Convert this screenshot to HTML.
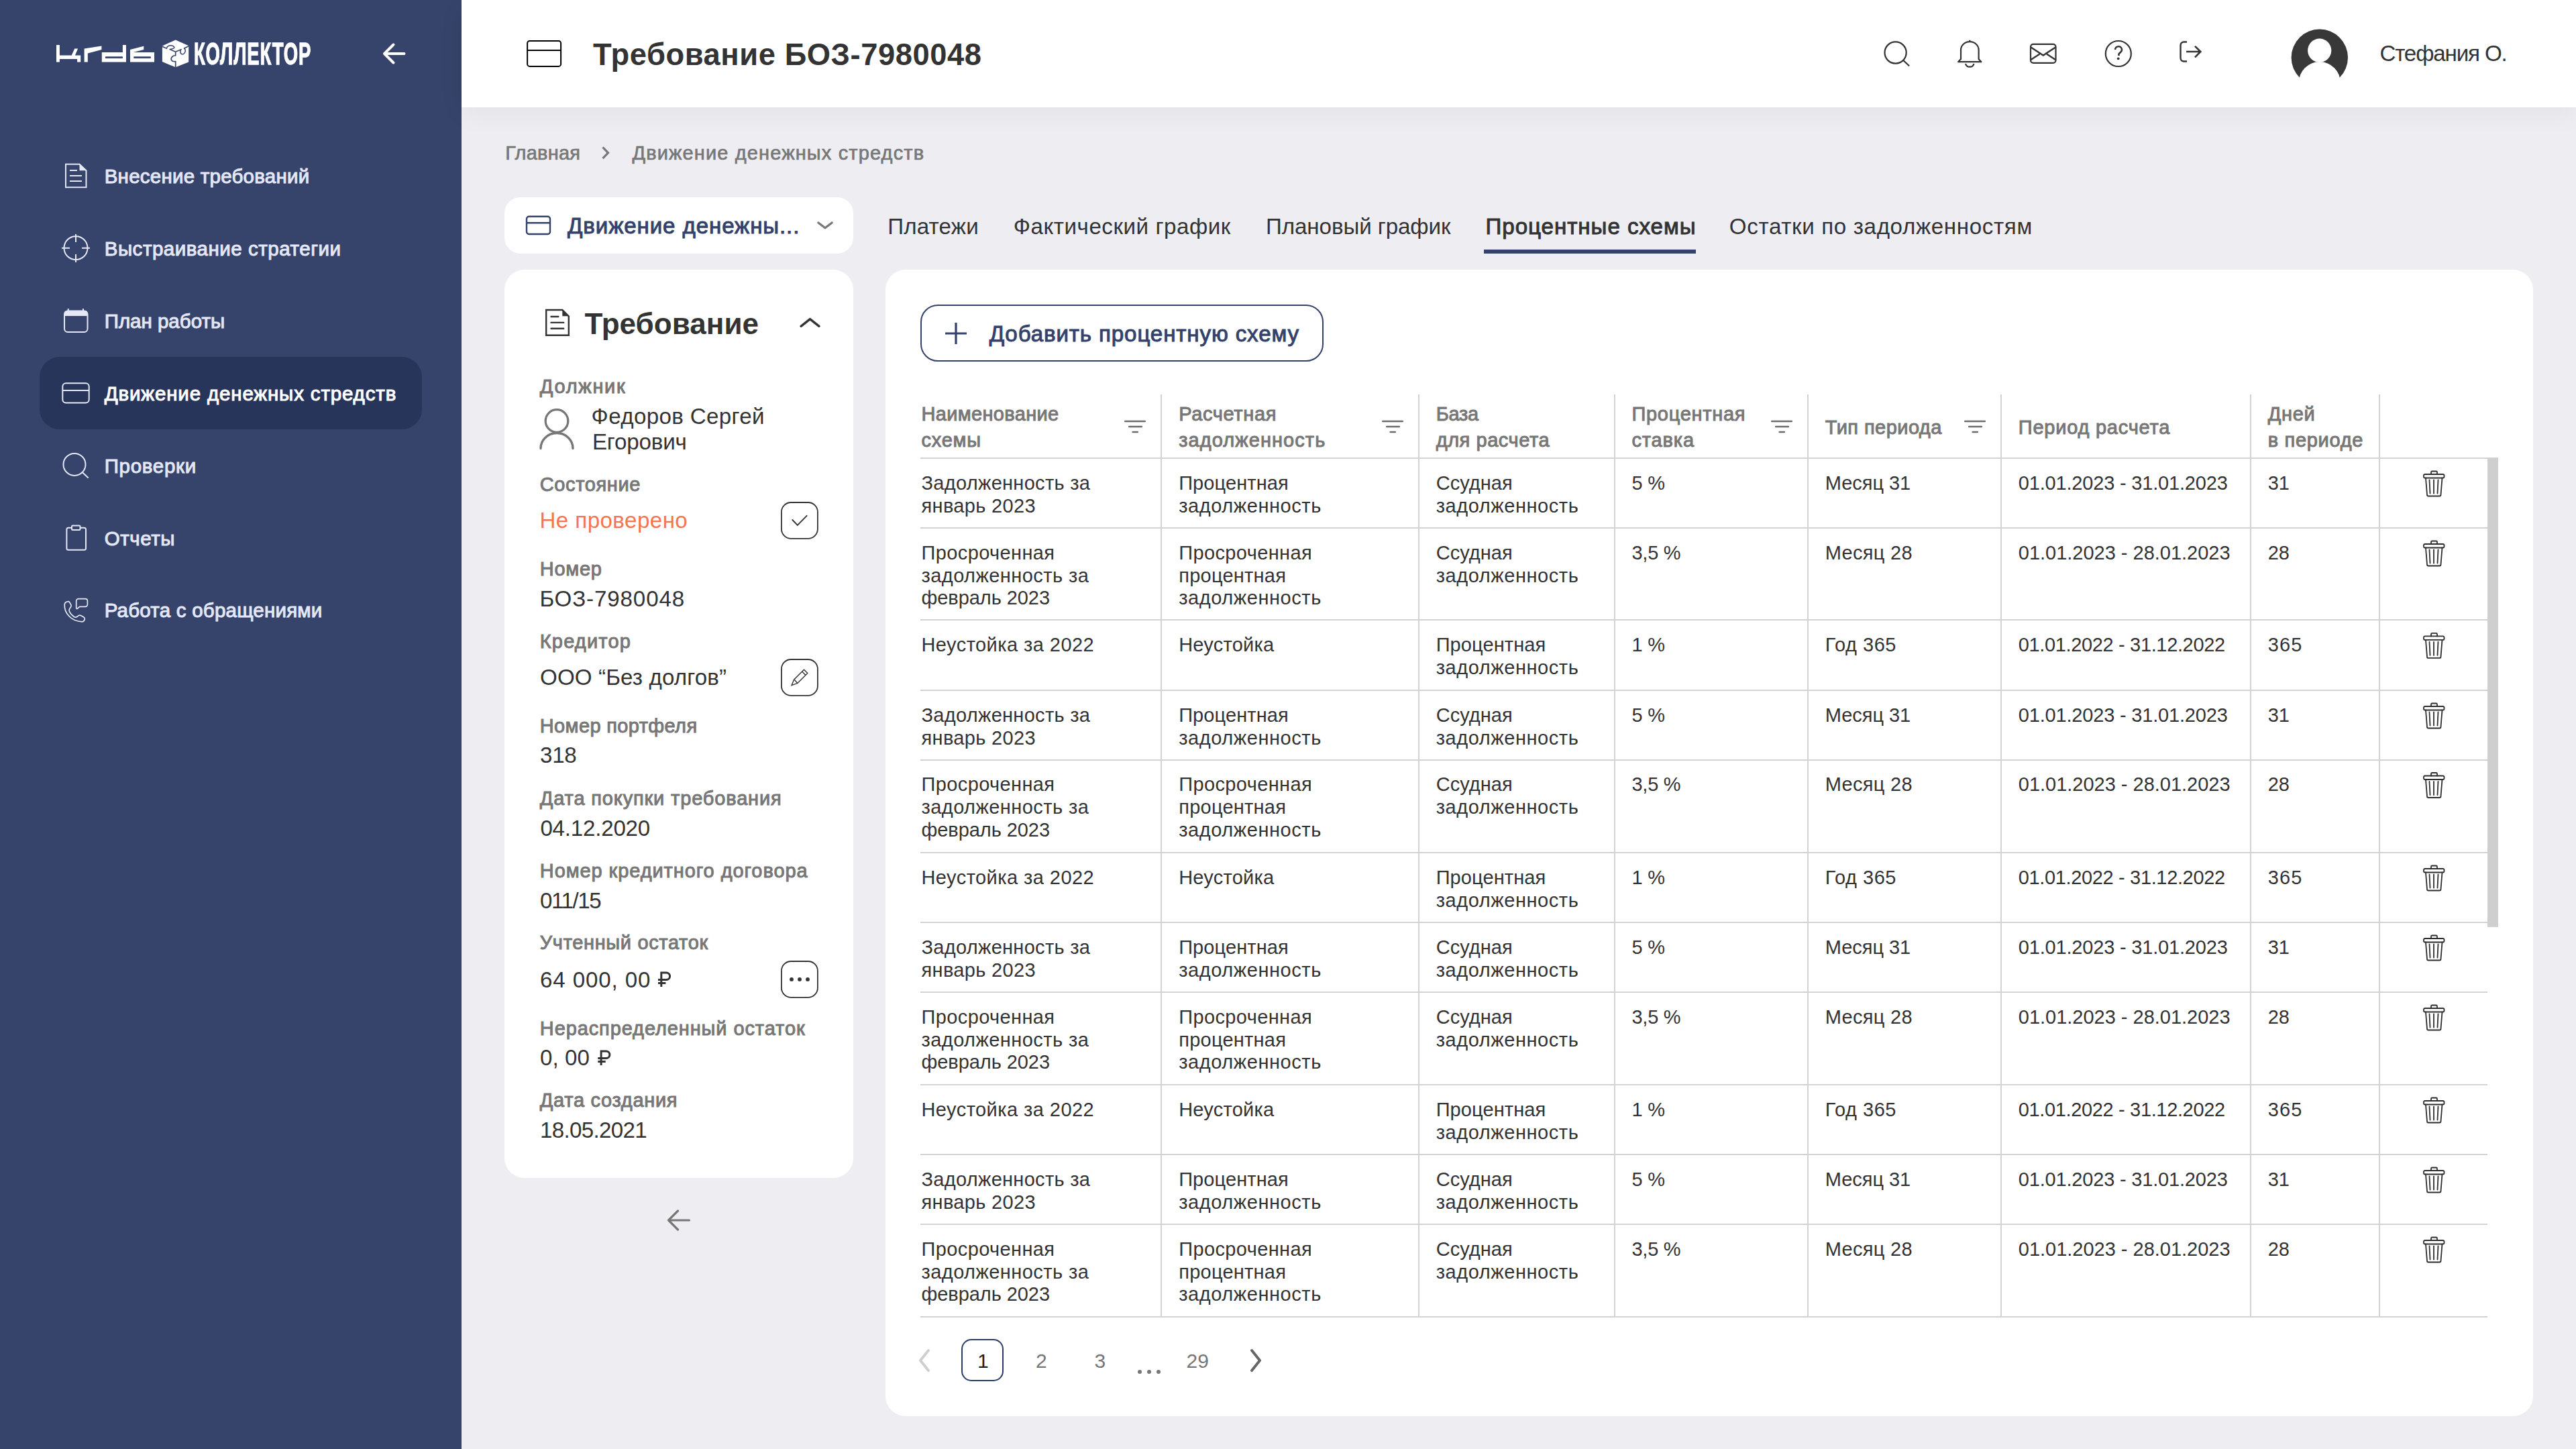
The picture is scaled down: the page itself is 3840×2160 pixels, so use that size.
<!DOCTYPE html><html><head><meta charset="utf-8"><style>
*{margin:0;padding:0;box-sizing:border-box}
html,body{width:3840px;height:2160px;overflow:hidden;background:#eeedf2;font-family:"Liberation Sans",sans-serif}
.t{position:absolute;white-space:nowrap;line-height:1}
.abs{position:absolute}
svg{position:absolute;overflow:visible}
</style></head><body>
<div class="abs" style="left:0;top:0;width:688px;height:2160px;background:#36436a"></div>
<svg style="left:0;top:0" width="688" height="160" viewBox="0 0 688 160" fill="#fff" fill-rule="evenodd">
<path d="M84 67.1H88.9V82.5H106.7L111.2 72.4H116.1L111.9 82.5H120.2V92.5H115.1V88.1H88.9V92.5H84Z"/>
<path d="M125.6 72.4L151.4 68.5V74.1L130.8 79.4V92.5H125.6Z"/>
<path d="M182.9 67.1H188V92.5H151.8V78H182.9ZM157 84.2V87H182.9V84.2Z"/>
<path d="M194 74.1L214.3 68.7V74.1L198.6 78H230V92.5H194ZM199.3 84.2V87H224.8V84.2Z"/>
</svg>
<svg style="left:0;top:0" width="688" height="160" viewBox="0 0 688 160">
<path d="M261.7 59.5L281.2 68.3V92.6L261.7 100.3L241.9 92V68.6Z" fill="#fff"/>
<g stroke="#36436a" stroke-width="1.5" fill="none" stroke-linejoin="round">
<path d="M241 69L248.6 72.3C248.4 70.5 250 68.2 253 67.9C256.5 67.6 259.8 68.8 259.8 70.8C259.8 72.4 257.5 73 253 73.5L261.7 77.2"/>
<path d="M261.7 77.2L270.1 73.6C268.3 75.5 268.2 79.5 270.8 80.6C273.3 81.4 276.3 79.3 276.3 75.5C276.3 73.8 275.5 72.5 274.4 72L281.5 68.8"/>
<path d="M261.7 77.2V82.8C258.6 82.5 255.3 84.5 255.2 87.8C255.1 90.3 257.3 92.3 261.7 91.6V100.8" stroke-width="1.7"/>
</g></svg>
<div class="t" style="left:289px;top:56.4px;font-size:47px;font-weight:700;color:#fff;transform-origin:0 0;transform:scaleX(0.585);-webkit-text-stroke:1.3px #fff;letter-spacing:1.4px">КОЛЛЕКТОР</div>
<svg style="left:0;top:0" width="688" height="160"><path d="M602.5 80H573M586.5 66.5L573 80l13.5 13.5" stroke="#fff" stroke-width="4" fill="none" stroke-linecap="round" stroke-linejoin="round"/></svg>
<div class="abs" style="left:59px;top:532px;width:570px;height:108px;border-radius:30px;background:#28355a"></div>
<div class="t" style="left:155.7px;top:248.3px;font-size:29.5px;font-weight:400;color:#e3e7f6;letter-spacing:0.24px;-webkit-text-stroke:1.0px #e3e7f6;">Внесение требований</div>
<div class="t" style="left:155.7px;top:356.3px;font-size:29.5px;font-weight:400;color:#e3e7f6;letter-spacing:0.52px;-webkit-text-stroke:1.0px #e3e7f6;">Выстраивание стратегии</div>
<div class="t" style="left:155.7px;top:464.3px;font-size:29.5px;font-weight:400;color:#e3e7f6;letter-spacing:-0.01px;-webkit-text-stroke:1.0px #e3e7f6;">План работы</div>
<div class="t" style="left:155.7px;top:572.3px;font-size:29.5px;font-weight:400;color:#fff;letter-spacing:0.85px;-webkit-text-stroke:1.0px #fff;">Движение денежных стредств</div>
<div class="t" style="left:155.7px;top:680.3px;font-size:29.5px;font-weight:400;color:#e3e7f6;letter-spacing:0.70px;-webkit-text-stroke:1.0px #e3e7f6;">Проверки</div>
<div class="t" style="left:155.7px;top:788.3px;font-size:29.5px;font-weight:400;color:#e3e7f6;letter-spacing:0.58px;-webkit-text-stroke:1.0px #e3e7f6;">Отчеты</div>
<div class="t" style="left:155.7px;top:895.3px;font-size:29.5px;font-weight:400;color:#e3e7f6;letter-spacing:0.22px;-webkit-text-stroke:1.0px #e3e7f6;">Работа с обращениями</div>
<svg style="left:0;top:0" width="688" height="1000" fill="none" stroke="#e3e7f6" stroke-width="2">
<path d="M98 244.8h20.5l10 9.5v25h-30.5z"/><path d="M118.5 244.8v9.5h10z" fill="#e3e7f6" stroke="none"/>
<path d="M104 254h11M104 262h18M104 270h18"/>
<circle cx="113" cy="369.7" r="17.5"/><path d="M113 349v12M113 379v12M92 369.7h12M122 369.7h12"/>
<rect x="96" y="463.5" width="34.5" height="31.5" rx="5"/><path d="M96 466a4 4 0 0 1 4-3h26.5a4 4 0 0 1 4 3v5h-34.5z" fill="#e3e7f6" stroke="none"/><path d="M101.7 460v4M124 460v4"/>
<rect x="93.3" y="571.2" width="39.4" height="29.4" rx="5"/><path d="M93.3 582h39.4"/>
<circle cx="111" cy="692.4" r="16.5"/><path d="M122.7 704.1l9 8.5"/>
<rect x="99.4" y="786.7" width="28.6" height="33" rx="2.5"/><rect x="107" y="783.5" width="12.5" height="6.5" rx="1.5" fill="#36436a"/>
<path d="M101.5 896.6C98.5 897 96.3 898.5 96.2 901.5C96 907 98 913 102.5 918C107 923 114 926.5 122.5 926.8C124.5 926.8 126.3 924.5 126.3 922.3C126.3 921 125.8 920.5 124.5 919.8L120.4 917.5C119.3 916.9 118.3 917 117.3 917.6L114.6 919.5C113.5 920.2 112 920.3 110.5 919.5C107.5 917.5 104.8 914.5 103.5 911.5C102.7 909.8 103 908.2 104 907L105.6 904.8C106.3 903.8 106.3 902.3 105.8 901.4L103.5 897.5C102.9 896.7 102.3 896.5 101.5 896.6Z" stroke-width="1.7"/>
<path d="M117 892.6H127.2A3.2 3.2 0 0 1 130.4 895.8V901A3.2 3.2 0 0 1 127.2 904.3H118.7L115.5 907.2C114.8 907.8 113.7 907.5 113.7 906.5V895.8A3.2 3.2 0 0 1 117 892.6Z" stroke-width="1.7"/>
</svg>
<div class="abs" style="left:688px;top:0;width:3152px;height:160px;background:#fff;box-shadow:0 10px 36px rgba(0,0,0,0.05)"></div>
<svg style="left:0;top:0" width="3840" height="160" fill="none" stroke="#000" stroke-width="2"><rect x="786.1" y="61" width="50" height="37.9" rx="3.5"/><path d="M786.1 74.9h50"/></svg>
<div class="t" style="left:884.0px;top:58.8px;font-size:45.32px;font-weight:700;color:#333;letter-spacing:0.57px;">Требование БОЗ-7980048</div>
<svg style="left:0;top:0" width="3840" height="160" fill="none" stroke="#333" stroke-width="2.2">
<circle cx="2825.6" cy="78.5" r="16.1"/><path d="M2837.5 90.3l8 7.5" stroke-linecap="round"/>
<path d="M2936.3 59.8v2.5M2923 88v-13.5c0-7 6-12.3 13.3-12.3s13.3 5.3 13.3 12.3V88l3.8 4.2h-34.3z" stroke-linejoin="round"/>
<path d="M2930 95a6.5 6.5 0 0 0 12.5 0"/>
<rect x="3027" y="65.8" width="37.5" height="28" rx="4"/><path d="M3027.5 70.5l18.3 12 18.3-12M3027.5 89l13-8.5M3064 89l-13-8.5" stroke-width="2.4"/>
<circle cx="3157.8" cy="80" r="19"/>
<path d="M3153 74a5 5 0 0 1 10 0.5c0 3-3.5 4-4.5 6v2.5" stroke-width="2.6"/><circle cx="3157.7" cy="87.3" r="1.9" fill="#333" stroke="none"/>
<path d="M3260 62.5h-4.5a5 5 0 0 0-5 5v19a5 5 0 0 0 5 5h4.5" stroke-width="2.4"/><path d="M3259 77h21.5M3272 68.8l8.3 8.2-8.3 8.3" stroke-width="2.6"/>
</svg>
<svg style="left:0;top:0" width="3840" height="160"><defs><mask id="avm" maskUnits="userSpaceOnUse" x="3400" y="30" width="120" height="110"><rect x="3400" y="30" width="120" height="110" fill="#fff"/><circle cx="3457.7" cy="75.2" r="17.6" fill="#000"/><circle cx="3457.8" cy="123.1" r="31" fill="#000"/></mask></defs>
<circle cx="3457.8" cy="85.8" r="42.2" fill="#383838" mask="url(#avm)"/></svg>
<div class="t" style="left:3547.4px;top:63.0px;font-size:33.12px;font-weight:400;color:#333;letter-spacing:-1.12px;">Стефания О.</div>
<div class="t" style="left:753.3px;top:213.9px;font-size:28.98px;font-weight:400;color:#777;letter-spacing:0.25px;-webkit-text-stroke:0.7px #777">Главная</div>
<svg style="left:0;top:0" width="1400" height="300"><path d="M898.5 219.5l8 8.3-8 8.3" stroke="#777" stroke-width="3.2" fill="none"/></svg>
<div class="t" style="left:942.4px;top:213.9px;font-size:28.98px;font-weight:400;color:#777;letter-spacing:1.15px;-webkit-text-stroke:0.7px #777">Движение денежных стредств</div>
<div class="abs" style="left:752px;top:294px;width:520px;height:84px;border-radius:24px;background:#fff"></div>
<svg style="left:0;top:0" width="1400" height="400" fill="none" stroke="#34426b" stroke-width="2.4"><rect x="785" y="322.8" width="35" height="26.2" rx="3.5"/><path d="M785 332.3h35"/><path d="M1219.8 331.9L1230 339.8L1240.2 331.9" stroke="#777" stroke-width="3.2" stroke-linecap="round" stroke-linejoin="round"/></svg>
<div class="t" style="left:846.0px;top:319.8px;font-size:33.12px;font-weight:400;color:#34426b;letter-spacing:0.89px;-webkit-text-stroke:1.0px #34426b;">Движение денежны...</div>
<div class="t" style="left:1323.2px;top:320.7px;font-size:33.12px;font-weight:400;color:#333;letter-spacing:0.20px;">Платежи</div>
<div class="t" style="left:1510.7px;top:320.7px;font-size:33.12px;font-weight:400;color:#333;letter-spacing:0.56px;">Фактический график</div>
<div class="t" style="left:1887.0px;top:320.7px;font-size:33.12px;font-weight:400;color:#333;letter-spacing:-0.07px;">Плановый график</div>
<div class="t" style="left:2214.5px;top:320.7px;font-size:33.12px;font-weight:400;color:#333;letter-spacing:0.97px;-webkit-text-stroke:1.0px #333;">Процентные схемы</div>
<div class="abs" style="left:2212px;top:372px;width:316px;height:6px;background:#34426b"></div>
<div class="t" style="left:2577.8px;top:320.7px;font-size:33.12px;font-weight:400;color:#333;letter-spacing:0.66px;">Остатки по задолженностям</div>
<div class="abs" style="left:752px;top:402px;width:520px;height:1354px;border-radius:30px;background:#fff"></div>
<svg style="left:0;top:0" width="1400" height="1900" fill="none" stroke="#333" stroke-width="2.4">
<path d="M814.2 462H838.3L847.8 471.5V499.8H814.2Z"/><path d="M838.3 462V471.3H847.8z" fill="#333" stroke="none"/>
<path d="M821.5 472H832.3M821.5 480.9H840.2M821.5 489.8H840.2" stroke-linecap="round"/>
<path d="M1194 486.3L1207.5 475.6L1221 486.3" stroke-width="3.4" stroke-linecap="round" stroke-linejoin="round"/>
<circle cx="830" cy="627.5" r="16.8" stroke="#777" stroke-width="3.3"/><path d="M806 668.5a24 23 0 0 1 48 0" stroke="#777" stroke-width="3.3" stroke-linecap="round"/>
<rect x="1164.9" y="749" width="54" height="53.8" rx="14.3" stroke-width="1.8"/><path d="M1181.3 775l7.5 7.8 13.8-14" stroke-width="1.9" stroke-linecap="round"/>
<rect x="1164.9" y="983" width="54" height="53.9" rx="14.3" stroke-width="1.8"/><path d="M1180.1 1021.6L1183.5 1013.2L1198.5 998.2L1203.8 1003.5L1188.8 1018.5ZM1195.6 1001.1L1201 1006.5M1184.5 1013.5L1188.5 1018" stroke-width="1.4" stroke-linejoin="miter"/>
<rect x="1164.9" y="1433" width="54" height="53.9" rx="14.3" stroke-width="1.8"/><circle cx="1180" cy="1459.9" r="2.9" fill="#333" stroke="none"/><circle cx="1192" cy="1459.9" r="2.9" fill="#333" stroke="none"/><circle cx="1204" cy="1459.9" r="2.9" fill="#333" stroke="none"/>
<path d="M1027.5 1819H996.5M1010.5 1805l-14 14 14 14" stroke="#777" stroke-width="3.2" stroke-linecap="round" stroke-linejoin="round"/>
</svg>
<div class="t" style="left:871.4px;top:460.6px;font-size:44.0px;font-weight:700;color:#333;letter-spacing:0.07px;">Требование</div>
<div class="t" style="left:804.8px;top:561.5px;font-size:28.98px;font-weight:400;color:#777;letter-spacing:1.72px;-webkit-text-stroke:1.0px #777;">Должник</div>
<div class="t" style="left:804.8px;top:707.5px;font-size:28.98px;font-weight:400;color:#777;letter-spacing:0.62px;-webkit-text-stroke:1.0px #777;">Состояние</div>
<div class="t" style="left:804.8px;top:833.8px;font-size:28.98px;font-weight:400;color:#777;letter-spacing:0.73px;-webkit-text-stroke:1.0px #777;">Номер</div>
<div class="t" style="left:804.8px;top:941.5px;font-size:28.98px;font-weight:400;color:#777;letter-spacing:1.20px;-webkit-text-stroke:1.0px #777;">Кредитор</div>
<div class="t" style="left:804.8px;top:1068.2px;font-size:28.98px;font-weight:400;color:#777;letter-spacing:0.38px;-webkit-text-stroke:1.0px #777;">Номер портфеля</div>
<div class="t" style="left:804.8px;top:1175.5px;font-size:28.98px;font-weight:400;color:#777;letter-spacing:0.86px;-webkit-text-stroke:1.0px #777;">Дата покупки требования</div>
<div class="t" style="left:804.8px;top:1283.7px;font-size:28.98px;font-weight:400;color:#777;letter-spacing:0.93px;-webkit-text-stroke:1.0px #777;">Номер кредитного договора</div>
<div class="t" style="left:804.8px;top:1391.0px;font-size:28.98px;font-weight:400;color:#777;letter-spacing:0.67px;-webkit-text-stroke:1.0px #777;">Учтенный остаток</div>
<div class="t" style="left:804.8px;top:1518.5px;font-size:28.98px;font-weight:400;color:#777;letter-spacing:0.91px;-webkit-text-stroke:1.0px #777;">Нераспределенный остаток</div>
<div class="t" style="left:804.8px;top:1625.5px;font-size:28.98px;font-weight:400;color:#777;letter-spacing:0.70px;-webkit-text-stroke:1.0px #777;">Дата создания</div>
<div class="t" style="left:881.6px;top:604.3px;font-size:33.12px;font-weight:400;color:#333;letter-spacing:0.37px;">Федоров Сергей</div>
<div class="t" style="left:882.9px;top:641.9px;font-size:33.12px;font-weight:400;color:#333;letter-spacing:-0.17px;">Егорович</div>
<div class="t" style="left:804.4px;top:875.8px;font-size:33.12px;font-weight:400;color:#333;letter-spacing:0.87px;">БОЗ-7980048</div>
<div class="t" style="left:805.0px;top:993.0px;font-size:33.12px;font-weight:400;color:#333;letter-spacing:0.13px;">ООО “Без долгов”</div>
<div class="t" style="left:805.0px;top:1109.0px;font-size:33.12px;font-weight:400;color:#333;letter-spacing:-0.25px;">318</div>
<div class="t" style="left:805.4px;top:1218.0px;font-size:33.12px;font-weight:400;color:#333;letter-spacing:-0.21px;">04.12.2020</div>
<div class="t" style="left:805.0px;top:1325.6px;font-size:33.12px;font-weight:400;color:#333;letter-spacing:-1.44px;">011/15</div>
<div class="t" style="left:805.0px;top:1443.5px;font-size:33.12px;font-weight:400;color:#333;letter-spacing:0.87px;">64 000, 00</div>
<div class="t" style="left:804.9px;top:1560.0px;font-size:33.12px;font-weight:400;color:#333;letter-spacing:0.12px;">0, 00</div>
<div class="t" style="left:805.0px;top:1668.0px;font-size:33.12px;font-weight:400;color:#333;letter-spacing:-0.67px;">18.05.2021</div>
<div class="t" style="left:804.4px;top:759.0px;font-size:33.12px;font-weight:400;color:#f47650;letter-spacing:0.45px;">Не проверено</div>
<svg style="left:0;top:0" width="1400" height="1800" fill="none" stroke="#333" stroke-width="3"><path d="M985.8 1471V1448.4M985.8 1449.9H993.3a5.3 5.3 0 0 1 0 10.6H981M981 1465.4H992.4"/></svg>
<svg style="left:0;top:0" width="1400" height="1800" fill="none" stroke="#333" stroke-width="3"><path d="M896.0999999999999 1588V1565.4M896.0999999999999 1566.9H903.5999999999999a5.3 5.3 0 0 1 0 10.6H891.3M891.3 1582.4H902.6999999999999"/></svg>
<div class="abs" style="left:1320px;top:402px;width:2456px;height:1709px;border-radius:30px;background:#fff"></div>
<div class="abs" style="left:1372px;top:454px;width:601px;height:85px;border-radius:26px;border:2px solid #34426b"></div>
<svg style="left:0;top:0" width="2000" height="600" stroke="#34426b" stroke-width="3.2"><path d="M1425 481v32M1409 497h32"/></svg>
<div class="t" style="left:1474.7px;top:480.9px;font-size:33.12px;font-weight:400;color:#34426b;letter-spacing:0.87px;-webkit-text-stroke:1.0px #34426b;">Добавить процентную схему</div>
<div class="abs" style="left:1730px;top:588px;width:2px;height:1375px;background:#d3d3d3"></div>
<div class="abs" style="left:2114px;top:588px;width:2px;height:1375px;background:#d3d3d3"></div>
<div class="abs" style="left:2406px;top:588px;width:2px;height:1375px;background:#d3d3d3"></div>
<div class="abs" style="left:2694px;top:588px;width:2px;height:1375px;background:#d3d3d3"></div>
<div class="abs" style="left:2982px;top:588px;width:2px;height:1375px;background:#d3d3d3"></div>
<div class="abs" style="left:3354px;top:588px;width:2px;height:1375px;background:#d3d3d3"></div>
<div class="abs" style="left:3546px;top:588px;width:2px;height:1375px;background:#d3d3d3"></div>
<div class="abs" style="left:1372px;top:682px;width:2352px;height:2px;background:#d3d3d3"></div>
<div class="abs" style="left:1372px;top:786px;width:2336px;height:2px;background:#d3d3d3"></div>
<div class="abs" style="left:1372px;top:923.4px;width:2336px;height:2px;background:#d3d3d3"></div>
<div class="abs" style="left:1372px;top:1028px;width:2336px;height:2px;background:#d3d3d3"></div>
<div class="abs" style="left:1372px;top:1131.5px;width:2336px;height:2px;background:#d3d3d3"></div>
<div class="abs" style="left:1372px;top:1270px;width:2336px;height:2px;background:#d3d3d3"></div>
<div class="abs" style="left:1372px;top:1374px;width:2336px;height:2px;background:#d3d3d3"></div>
<div class="abs" style="left:1372px;top:1478px;width:2336px;height:2px;background:#d3d3d3"></div>
<div class="abs" style="left:1372px;top:1616px;width:2336px;height:2px;background:#d3d3d3"></div>
<div class="abs" style="left:1372px;top:1720px;width:2336px;height:2px;background:#d3d3d3"></div>
<div class="abs" style="left:1372px;top:1824px;width:2336px;height:2px;background:#d3d3d3"></div>
<div class="abs" style="left:1372px;top:1962px;width:2336px;height:2px;background:#d3d3d3"></div>
<div class="abs" style="left:3708px;top:682px;width:16px;height:700px;background:#cfcfcf"></div>
<div class="t" style="left:1373.5px;top:603.4px;font-size:28.98px;font-weight:400;color:#777;letter-spacing:0.35px;-webkit-text-stroke:1.0px #777;">Наименование</div>
<div class="t" style="left:1373.5px;top:641.6px;font-size:28.98px;font-weight:400;color:#777;letter-spacing:0.75px;-webkit-text-stroke:1.0px #777;">схемы</div>
<div class="t" style="left:1757.2px;top:603.4px;font-size:28.98px;font-weight:400;color:#777;letter-spacing:0.66px;-webkit-text-stroke:1.0px #777;">Расчетная</div>
<div class="t" style="left:1757.2px;top:641.6px;font-size:28.98px;font-weight:400;color:#777;letter-spacing:1.08px;-webkit-text-stroke:1.0px #777;">задолженность</div>
<div class="t" style="left:2140.7px;top:603.4px;font-size:28.98px;font-weight:400;color:#777;letter-spacing:-0.25px;-webkit-text-stroke:1.0px #777;">База</div>
<div class="t" style="left:2140.7px;top:641.6px;font-size:28.98px;font-weight:400;color:#777;letter-spacing:0.56px;-webkit-text-stroke:1.0px #777;">для расчета</div>
<div class="t" style="left:2432.5px;top:603.4px;font-size:28.98px;font-weight:400;color:#777;letter-spacing:0.72px;-webkit-text-stroke:1.0px #777;">Процентная</div>
<div class="t" style="left:2432.5px;top:641.6px;font-size:28.98px;font-weight:400;color:#777;letter-spacing:0.84px;-webkit-text-stroke:1.0px #777;">ставка</div>
<div class="t" style="left:2720.8px;top:622.8px;font-size:28.98px;font-weight:400;color:#777;letter-spacing:0.46px;-webkit-text-stroke:1.0px #777;">Тип периода</div>
<div class="t" style="left:3008.8px;top:622.8px;font-size:28.98px;font-weight:400;color:#777;letter-spacing:0.78px;-webkit-text-stroke:1.0px #777;">Период расчета</div>
<div class="t" style="left:3380.8px;top:603.4px;font-size:28.98px;font-weight:400;color:#777;letter-spacing:0.70px;-webkit-text-stroke:1.0px #777;">Дней</div>
<div class="t" style="left:3380.8px;top:641.6px;font-size:28.98px;font-weight:400;color:#777;letter-spacing:0.69px;-webkit-text-stroke:1.0px #777;">в периоде</div>
<svg style="left:0;top:0" width="3840" height="700" stroke="#6b6b6b" stroke-width="2.3" stroke-linecap="round"><path d="M1677 628h30M1683 636h19M1688.5 644h7.5"/></svg>
<svg style="left:0;top:0" width="3840" height="700" stroke="#6b6b6b" stroke-width="2.3" stroke-linecap="round"><path d="M2061 628h30M2067 636h19M2072.5 644h7.5"/></svg>
<svg style="left:0;top:0" width="3840" height="700" stroke="#6b6b6b" stroke-width="2.3" stroke-linecap="round"><path d="M2641 628h30M2647 636h19M2652.5 644h7.5"/></svg>
<svg style="left:0;top:0" width="3840" height="700" stroke="#6b6b6b" stroke-width="2.3" stroke-linecap="round"><path d="M2929 628h30M2935 636h19M2940.5 644h7.5"/></svg>
<div class="t" style="left:1373.5px;top:705.7px;font-size:28.98px;font-weight:400;color:#333;letter-spacing:0.31px;">Задолженность за</div>
<div class="t" style="left:1373.5px;top:739.5px;font-size:28.98px;font-weight:400;color:#333;letter-spacing:0.35px;">январь 2023</div>
<div class="t" style="left:1757.2px;top:705.7px;font-size:28.98px;font-weight:400;color:#333;letter-spacing:0.11px;">Процентная</div>
<div class="t" style="left:1757.2px;top:739.5px;font-size:28.98px;font-weight:400;color:#333;letter-spacing:0.58px;">задолженность</div>
<div class="t" style="left:2140.7px;top:705.7px;font-size:28.98px;font-weight:400;color:#333;letter-spacing:0.07px;">Ссудная</div>
<div class="t" style="left:2140.7px;top:739.5px;font-size:28.98px;font-weight:400;color:#333;letter-spacing:0.58px;">задолженность</div>
<div class="t" style="left:2432.5px;top:705.7px;font-size:28.98px;font-weight:400;color:#333;letter-spacing:-0.25px;">5 %</div>
<div class="t" style="left:2720.8px;top:705.7px;font-size:28.98px;font-weight:400;color:#333;letter-spacing:-0.03px;">Месяц 31</div>
<div class="t" style="left:3008.8px;top:705.7px;font-size:28.98px;font-weight:400;color:#333;letter-spacing:-0.17px;">01.01.2023 - 31.01.2023</div>
<div class="t" style="left:3380.8px;top:705.7px;font-size:28.98px;font-weight:400;color:#333;letter-spacing:-0.25px;">31</div>
<svg style="left:0;top:0" width="3840" height="2160" fill="none" stroke="#2e2e2e" stroke-width="1.8" stroke-linejoin="round" stroke-linecap="round"><g transform="translate(0,0)"><path d="M3624 707v-3a1.5 1.5 0 0 1 1.5-1.5h6a1.5 1.5 0 0 1 1.5 1.5v3"/><path d="M3615 707h26.5a2 2 0 0 1 2 2v1.5a2 2 0 0 1-2 2h-26.5a2 2 0 0 1-2-2v-1.5a2 2 0 0 1 2-2z"/><path d="M3616 712.5l2 25a2 2 0 0 0 2 2h16.5a2 2 0 0 0 2-2l2-25M3621.5 715.5l1 20M3628 715.5v20M3634.5 715.5l-1 20"/></g></svg>
<div class="t" style="left:1373.5px;top:809.7px;font-size:28.98px;font-weight:400;color:#333;letter-spacing:0.40px;">Просроченная</div>
<div class="t" style="left:1373.5px;top:843.5px;font-size:28.98px;font-weight:400;color:#333;letter-spacing:0.45px;">задолженность за</div>
<div class="t" style="left:1373.5px;top:877.3px;font-size:28.98px;font-weight:400;color:#333;letter-spacing:-0.05px;">февраль 2023</div>
<div class="t" style="left:1757.2px;top:809.7px;font-size:28.98px;font-weight:400;color:#333;letter-spacing:0.40px;">Просроченная</div>
<div class="t" style="left:1757.2px;top:843.5px;font-size:28.98px;font-weight:400;color:#333;letter-spacing:0.26px;">процентная</div>
<div class="t" style="left:1757.2px;top:877.3px;font-size:28.98px;font-weight:400;color:#333;letter-spacing:0.58px;">задолженность</div>
<div class="t" style="left:2140.7px;top:809.7px;font-size:28.98px;font-weight:400;color:#333;letter-spacing:0.07px;">Ссудная</div>
<div class="t" style="left:2140.7px;top:843.5px;font-size:28.98px;font-weight:400;color:#333;letter-spacing:0.58px;">задолженность</div>
<div class="t" style="left:2432.5px;top:809.7px;font-size:28.98px;font-weight:400;color:#333;letter-spacing:-0.25px;">3,5 %</div>
<div class="t" style="left:2720.8px;top:809.7px;font-size:28.98px;font-weight:400;color:#333;letter-spacing:0.30px;">Месяц 28</div>
<div class="t" style="left:3008.8px;top:809.7px;font-size:28.98px;font-weight:400;color:#333;letter-spacing:0.00px;">01.01.2023 - 28.01.2023</div>
<div class="t" style="left:3380.8px;top:809.7px;font-size:28.98px;font-weight:400;color:#333;letter-spacing:-0.25px;">28</div>
<svg style="left:0;top:0" width="3840" height="2160" fill="none" stroke="#2e2e2e" stroke-width="1.8" stroke-linejoin="round" stroke-linecap="round"><g transform="translate(0,104)"><path d="M3624 707v-3a1.5 1.5 0 0 1 1.5-1.5h6a1.5 1.5 0 0 1 1.5 1.5v3"/><path d="M3615 707h26.5a2 2 0 0 1 2 2v1.5a2 2 0 0 1-2 2h-26.5a2 2 0 0 1-2-2v-1.5a2 2 0 0 1 2-2z"/><path d="M3616 712.5l2 25a2 2 0 0 0 2 2h16.5a2 2 0 0 0 2-2l2-25M3621.5 715.5l1 20M3628 715.5v20M3634.5 715.5l-1 20"/></g></svg>
<div class="t" style="left:1373.5px;top:947.1px;font-size:28.98px;font-weight:400;color:#333;letter-spacing:0.45px;">Неустойка за 2022</div>
<div class="t" style="left:1757.2px;top:947.1px;font-size:28.98px;font-weight:400;color:#333;letter-spacing:0.23px;">Неустойка</div>
<div class="t" style="left:2140.7px;top:947.1px;font-size:28.98px;font-weight:400;color:#333;letter-spacing:0.11px;">Процентная</div>
<div class="t" style="left:2140.7px;top:980.9px;font-size:28.98px;font-weight:400;color:#333;letter-spacing:0.58px;">задолженность</div>
<div class="t" style="left:2432.5px;top:947.1px;font-size:28.98px;font-weight:400;color:#333;letter-spacing:-0.25px;">1 %</div>
<div class="t" style="left:2720.8px;top:947.1px;font-size:28.98px;font-weight:400;color:#333;letter-spacing:0.53px;">Год 365</div>
<div class="t" style="left:3008.8px;top:947.1px;font-size:28.98px;font-weight:400;color:#333;letter-spacing:-0.34px;">01.01.2022 - 31.12.2022</div>
<div class="t" style="left:3380.8px;top:947.1px;font-size:28.98px;font-weight:400;color:#333;letter-spacing:1.10px;">365</div>
<svg style="left:0;top:0" width="3840" height="2160" fill="none" stroke="#2e2e2e" stroke-width="1.8" stroke-linejoin="round" stroke-linecap="round"><g transform="translate(0,241.39999999999998)"><path d="M3624 707v-3a1.5 1.5 0 0 1 1.5-1.5h6a1.5 1.5 0 0 1 1.5 1.5v3"/><path d="M3615 707h26.5a2 2 0 0 1 2 2v1.5a2 2 0 0 1-2 2h-26.5a2 2 0 0 1-2-2v-1.5a2 2 0 0 1 2-2z"/><path d="M3616 712.5l2 25a2 2 0 0 0 2 2h16.5a2 2 0 0 0 2-2l2-25M3621.5 715.5l1 20M3628 715.5v20M3634.5 715.5l-1 20"/></g></svg>
<div class="t" style="left:1373.5px;top:1051.7px;font-size:28.98px;font-weight:400;color:#333;letter-spacing:0.31px;">Задолженность за</div>
<div class="t" style="left:1373.5px;top:1085.5px;font-size:28.98px;font-weight:400;color:#333;letter-spacing:0.35px;">январь 2023</div>
<div class="t" style="left:1757.2px;top:1051.7px;font-size:28.98px;font-weight:400;color:#333;letter-spacing:0.11px;">Процентная</div>
<div class="t" style="left:1757.2px;top:1085.5px;font-size:28.98px;font-weight:400;color:#333;letter-spacing:0.58px;">задолженность</div>
<div class="t" style="left:2140.7px;top:1051.7px;font-size:28.98px;font-weight:400;color:#333;letter-spacing:0.07px;">Ссудная</div>
<div class="t" style="left:2140.7px;top:1085.5px;font-size:28.98px;font-weight:400;color:#333;letter-spacing:0.58px;">задолженность</div>
<div class="t" style="left:2432.5px;top:1051.7px;font-size:28.98px;font-weight:400;color:#333;letter-spacing:-0.25px;">5 %</div>
<div class="t" style="left:2720.8px;top:1051.7px;font-size:28.98px;font-weight:400;color:#333;letter-spacing:-0.03px;">Месяц 31</div>
<div class="t" style="left:3008.8px;top:1051.7px;font-size:28.98px;font-weight:400;color:#333;letter-spacing:-0.17px;">01.01.2023 - 31.01.2023</div>
<div class="t" style="left:3380.8px;top:1051.7px;font-size:28.98px;font-weight:400;color:#333;letter-spacing:-0.25px;">31</div>
<svg style="left:0;top:0" width="3840" height="2160" fill="none" stroke="#2e2e2e" stroke-width="1.8" stroke-linejoin="round" stroke-linecap="round"><g transform="translate(0,346)"><path d="M3624 707v-3a1.5 1.5 0 0 1 1.5-1.5h6a1.5 1.5 0 0 1 1.5 1.5v3"/><path d="M3615 707h26.5a2 2 0 0 1 2 2v1.5a2 2 0 0 1-2 2h-26.5a2 2 0 0 1-2-2v-1.5a2 2 0 0 1 2-2z"/><path d="M3616 712.5l2 25a2 2 0 0 0 2 2h16.5a2 2 0 0 0 2-2l2-25M3621.5 715.5l1 20M3628 715.5v20M3634.5 715.5l-1 20"/></g></svg>
<div class="t" style="left:1373.5px;top:1155.2px;font-size:28.98px;font-weight:400;color:#333;letter-spacing:0.40px;">Просроченная</div>
<div class="t" style="left:1373.5px;top:1189.0px;font-size:28.98px;font-weight:400;color:#333;letter-spacing:0.45px;">задолженность за</div>
<div class="t" style="left:1373.5px;top:1222.8px;font-size:28.98px;font-weight:400;color:#333;letter-spacing:-0.05px;">февраль 2023</div>
<div class="t" style="left:1757.2px;top:1155.2px;font-size:28.98px;font-weight:400;color:#333;letter-spacing:0.40px;">Просроченная</div>
<div class="t" style="left:1757.2px;top:1189.0px;font-size:28.98px;font-weight:400;color:#333;letter-spacing:0.26px;">процентная</div>
<div class="t" style="left:1757.2px;top:1222.8px;font-size:28.98px;font-weight:400;color:#333;letter-spacing:0.58px;">задолженность</div>
<div class="t" style="left:2140.7px;top:1155.2px;font-size:28.98px;font-weight:400;color:#333;letter-spacing:0.07px;">Ссудная</div>
<div class="t" style="left:2140.7px;top:1189.0px;font-size:28.98px;font-weight:400;color:#333;letter-spacing:0.58px;">задолженность</div>
<div class="t" style="left:2432.5px;top:1155.2px;font-size:28.98px;font-weight:400;color:#333;letter-spacing:-0.25px;">3,5 %</div>
<div class="t" style="left:2720.8px;top:1155.2px;font-size:28.98px;font-weight:400;color:#333;letter-spacing:0.30px;">Месяц 28</div>
<div class="t" style="left:3008.8px;top:1155.2px;font-size:28.98px;font-weight:400;color:#333;letter-spacing:0.00px;">01.01.2023 - 28.01.2023</div>
<div class="t" style="left:3380.8px;top:1155.2px;font-size:28.98px;font-weight:400;color:#333;letter-spacing:-0.25px;">28</div>
<svg style="left:0;top:0" width="3840" height="2160" fill="none" stroke="#2e2e2e" stroke-width="1.8" stroke-linejoin="round" stroke-linecap="round"><g transform="translate(0,449.5)"><path d="M3624 707v-3a1.5 1.5 0 0 1 1.5-1.5h6a1.5 1.5 0 0 1 1.5 1.5v3"/><path d="M3615 707h26.5a2 2 0 0 1 2 2v1.5a2 2 0 0 1-2 2h-26.5a2 2 0 0 1-2-2v-1.5a2 2 0 0 1 2-2z"/><path d="M3616 712.5l2 25a2 2 0 0 0 2 2h16.5a2 2 0 0 0 2-2l2-25M3621.5 715.5l1 20M3628 715.5v20M3634.5 715.5l-1 20"/></g></svg>
<div class="t" style="left:1373.5px;top:1293.7px;font-size:28.98px;font-weight:400;color:#333;letter-spacing:0.45px;">Неустойка за 2022</div>
<div class="t" style="left:1757.2px;top:1293.7px;font-size:28.98px;font-weight:400;color:#333;letter-spacing:0.23px;">Неустойка</div>
<div class="t" style="left:2140.7px;top:1293.7px;font-size:28.98px;font-weight:400;color:#333;letter-spacing:0.11px;">Процентная</div>
<div class="t" style="left:2140.7px;top:1327.5px;font-size:28.98px;font-weight:400;color:#333;letter-spacing:0.58px;">задолженность</div>
<div class="t" style="left:2432.5px;top:1293.7px;font-size:28.98px;font-weight:400;color:#333;letter-spacing:-0.25px;">1 %</div>
<div class="t" style="left:2720.8px;top:1293.7px;font-size:28.98px;font-weight:400;color:#333;letter-spacing:0.53px;">Год 365</div>
<div class="t" style="left:3008.8px;top:1293.7px;font-size:28.98px;font-weight:400;color:#333;letter-spacing:-0.34px;">01.01.2022 - 31.12.2022</div>
<div class="t" style="left:3380.8px;top:1293.7px;font-size:28.98px;font-weight:400;color:#333;letter-spacing:1.10px;">365</div>
<svg style="left:0;top:0" width="3840" height="2160" fill="none" stroke="#2e2e2e" stroke-width="1.8" stroke-linejoin="round" stroke-linecap="round"><g transform="translate(0,588)"><path d="M3624 707v-3a1.5 1.5 0 0 1 1.5-1.5h6a1.5 1.5 0 0 1 1.5 1.5v3"/><path d="M3615 707h26.5a2 2 0 0 1 2 2v1.5a2 2 0 0 1-2 2h-26.5a2 2 0 0 1-2-2v-1.5a2 2 0 0 1 2-2z"/><path d="M3616 712.5l2 25a2 2 0 0 0 2 2h16.5a2 2 0 0 0 2-2l2-25M3621.5 715.5l1 20M3628 715.5v20M3634.5 715.5l-1 20"/></g></svg>
<div class="t" style="left:1373.5px;top:1397.7px;font-size:28.98px;font-weight:400;color:#333;letter-spacing:0.31px;">Задолженность за</div>
<div class="t" style="left:1373.5px;top:1431.5px;font-size:28.98px;font-weight:400;color:#333;letter-spacing:0.35px;">январь 2023</div>
<div class="t" style="left:1757.2px;top:1397.7px;font-size:28.98px;font-weight:400;color:#333;letter-spacing:0.11px;">Процентная</div>
<div class="t" style="left:1757.2px;top:1431.5px;font-size:28.98px;font-weight:400;color:#333;letter-spacing:0.58px;">задолженность</div>
<div class="t" style="left:2140.7px;top:1397.7px;font-size:28.98px;font-weight:400;color:#333;letter-spacing:0.07px;">Ссудная</div>
<div class="t" style="left:2140.7px;top:1431.5px;font-size:28.98px;font-weight:400;color:#333;letter-spacing:0.58px;">задолженность</div>
<div class="t" style="left:2432.5px;top:1397.7px;font-size:28.98px;font-weight:400;color:#333;letter-spacing:-0.25px;">5 %</div>
<div class="t" style="left:2720.8px;top:1397.7px;font-size:28.98px;font-weight:400;color:#333;letter-spacing:-0.03px;">Месяц 31</div>
<div class="t" style="left:3008.8px;top:1397.7px;font-size:28.98px;font-weight:400;color:#333;letter-spacing:-0.17px;">01.01.2023 - 31.01.2023</div>
<div class="t" style="left:3380.8px;top:1397.7px;font-size:28.98px;font-weight:400;color:#333;letter-spacing:-0.25px;">31</div>
<svg style="left:0;top:0" width="3840" height="2160" fill="none" stroke="#2e2e2e" stroke-width="1.8" stroke-linejoin="round" stroke-linecap="round"><g transform="translate(0,692)"><path d="M3624 707v-3a1.5 1.5 0 0 1 1.5-1.5h6a1.5 1.5 0 0 1 1.5 1.5v3"/><path d="M3615 707h26.5a2 2 0 0 1 2 2v1.5a2 2 0 0 1-2 2h-26.5a2 2 0 0 1-2-2v-1.5a2 2 0 0 1 2-2z"/><path d="M3616 712.5l2 25a2 2 0 0 0 2 2h16.5a2 2 0 0 0 2-2l2-25M3621.5 715.5l1 20M3628 715.5v20M3634.5 715.5l-1 20"/></g></svg>
<div class="t" style="left:1373.5px;top:1501.7px;font-size:28.98px;font-weight:400;color:#333;letter-spacing:0.40px;">Просроченная</div>
<div class="t" style="left:1373.5px;top:1535.5px;font-size:28.98px;font-weight:400;color:#333;letter-spacing:0.45px;">задолженность за</div>
<div class="t" style="left:1373.5px;top:1569.3px;font-size:28.98px;font-weight:400;color:#333;letter-spacing:-0.05px;">февраль 2023</div>
<div class="t" style="left:1757.2px;top:1501.7px;font-size:28.98px;font-weight:400;color:#333;letter-spacing:0.40px;">Просроченная</div>
<div class="t" style="left:1757.2px;top:1535.5px;font-size:28.98px;font-weight:400;color:#333;letter-spacing:0.26px;">процентная</div>
<div class="t" style="left:1757.2px;top:1569.3px;font-size:28.98px;font-weight:400;color:#333;letter-spacing:0.58px;">задолженность</div>
<div class="t" style="left:2140.7px;top:1501.7px;font-size:28.98px;font-weight:400;color:#333;letter-spacing:0.07px;">Ссудная</div>
<div class="t" style="left:2140.7px;top:1535.5px;font-size:28.98px;font-weight:400;color:#333;letter-spacing:0.58px;">задолженность</div>
<div class="t" style="left:2432.5px;top:1501.7px;font-size:28.98px;font-weight:400;color:#333;letter-spacing:-0.25px;">3,5 %</div>
<div class="t" style="left:2720.8px;top:1501.7px;font-size:28.98px;font-weight:400;color:#333;letter-spacing:0.30px;">Месяц 28</div>
<div class="t" style="left:3008.8px;top:1501.7px;font-size:28.98px;font-weight:400;color:#333;letter-spacing:0.00px;">01.01.2023 - 28.01.2023</div>
<div class="t" style="left:3380.8px;top:1501.7px;font-size:28.98px;font-weight:400;color:#333;letter-spacing:-0.25px;">28</div>
<svg style="left:0;top:0" width="3840" height="2160" fill="none" stroke="#2e2e2e" stroke-width="1.8" stroke-linejoin="round" stroke-linecap="round"><g transform="translate(0,796)"><path d="M3624 707v-3a1.5 1.5 0 0 1 1.5-1.5h6a1.5 1.5 0 0 1 1.5 1.5v3"/><path d="M3615 707h26.5a2 2 0 0 1 2 2v1.5a2 2 0 0 1-2 2h-26.5a2 2 0 0 1-2-2v-1.5a2 2 0 0 1 2-2z"/><path d="M3616 712.5l2 25a2 2 0 0 0 2 2h16.5a2 2 0 0 0 2-2l2-25M3621.5 715.5l1 20M3628 715.5v20M3634.5 715.5l-1 20"/></g></svg>
<div class="t" style="left:1373.5px;top:1639.7px;font-size:28.98px;font-weight:400;color:#333;letter-spacing:0.45px;">Неустойка за 2022</div>
<div class="t" style="left:1757.2px;top:1639.7px;font-size:28.98px;font-weight:400;color:#333;letter-spacing:0.23px;">Неустойка</div>
<div class="t" style="left:2140.7px;top:1639.7px;font-size:28.98px;font-weight:400;color:#333;letter-spacing:0.11px;">Процентная</div>
<div class="t" style="left:2140.7px;top:1673.5px;font-size:28.98px;font-weight:400;color:#333;letter-spacing:0.58px;">задолженность</div>
<div class="t" style="left:2432.5px;top:1639.7px;font-size:28.98px;font-weight:400;color:#333;letter-spacing:-0.25px;">1 %</div>
<div class="t" style="left:2720.8px;top:1639.7px;font-size:28.98px;font-weight:400;color:#333;letter-spacing:0.53px;">Год 365</div>
<div class="t" style="left:3008.8px;top:1639.7px;font-size:28.98px;font-weight:400;color:#333;letter-spacing:-0.34px;">01.01.2022 - 31.12.2022</div>
<div class="t" style="left:3380.8px;top:1639.7px;font-size:28.98px;font-weight:400;color:#333;letter-spacing:1.10px;">365</div>
<svg style="left:0;top:0" width="3840" height="2160" fill="none" stroke="#2e2e2e" stroke-width="1.8" stroke-linejoin="round" stroke-linecap="round"><g transform="translate(0,934)"><path d="M3624 707v-3a1.5 1.5 0 0 1 1.5-1.5h6a1.5 1.5 0 0 1 1.5 1.5v3"/><path d="M3615 707h26.5a2 2 0 0 1 2 2v1.5a2 2 0 0 1-2 2h-26.5a2 2 0 0 1-2-2v-1.5a2 2 0 0 1 2-2z"/><path d="M3616 712.5l2 25a2 2 0 0 0 2 2h16.5a2 2 0 0 0 2-2l2-25M3621.5 715.5l1 20M3628 715.5v20M3634.5 715.5l-1 20"/></g></svg>
<div class="t" style="left:1373.5px;top:1743.7px;font-size:28.98px;font-weight:400;color:#333;letter-spacing:0.31px;">Задолженность за</div>
<div class="t" style="left:1373.5px;top:1777.5px;font-size:28.98px;font-weight:400;color:#333;letter-spacing:0.35px;">январь 2023</div>
<div class="t" style="left:1757.2px;top:1743.7px;font-size:28.98px;font-weight:400;color:#333;letter-spacing:0.11px;">Процентная</div>
<div class="t" style="left:1757.2px;top:1777.5px;font-size:28.98px;font-weight:400;color:#333;letter-spacing:0.58px;">задолженность</div>
<div class="t" style="left:2140.7px;top:1743.7px;font-size:28.98px;font-weight:400;color:#333;letter-spacing:0.07px;">Ссудная</div>
<div class="t" style="left:2140.7px;top:1777.5px;font-size:28.98px;font-weight:400;color:#333;letter-spacing:0.58px;">задолженность</div>
<div class="t" style="left:2432.5px;top:1743.7px;font-size:28.98px;font-weight:400;color:#333;letter-spacing:-0.25px;">5 %</div>
<div class="t" style="left:2720.8px;top:1743.7px;font-size:28.98px;font-weight:400;color:#333;letter-spacing:-0.03px;">Месяц 31</div>
<div class="t" style="left:3008.8px;top:1743.7px;font-size:28.98px;font-weight:400;color:#333;letter-spacing:-0.17px;">01.01.2023 - 31.01.2023</div>
<div class="t" style="left:3380.8px;top:1743.7px;font-size:28.98px;font-weight:400;color:#333;letter-spacing:-0.25px;">31</div>
<svg style="left:0;top:0" width="3840" height="2160" fill="none" stroke="#2e2e2e" stroke-width="1.8" stroke-linejoin="round" stroke-linecap="round"><g transform="translate(0,1038)"><path d="M3624 707v-3a1.5 1.5 0 0 1 1.5-1.5h6a1.5 1.5 0 0 1 1.5 1.5v3"/><path d="M3615 707h26.5a2 2 0 0 1 2 2v1.5a2 2 0 0 1-2 2h-26.5a2 2 0 0 1-2-2v-1.5a2 2 0 0 1 2-2z"/><path d="M3616 712.5l2 25a2 2 0 0 0 2 2h16.5a2 2 0 0 0 2-2l2-25M3621.5 715.5l1 20M3628 715.5v20M3634.5 715.5l-1 20"/></g></svg>
<div class="t" style="left:1373.5px;top:1847.7px;font-size:28.98px;font-weight:400;color:#333;letter-spacing:0.40px;">Просроченная</div>
<div class="t" style="left:1373.5px;top:1881.5px;font-size:28.98px;font-weight:400;color:#333;letter-spacing:0.45px;">задолженность за</div>
<div class="t" style="left:1373.5px;top:1915.3px;font-size:28.98px;font-weight:400;color:#333;letter-spacing:-0.05px;">февраль 2023</div>
<div class="t" style="left:1757.2px;top:1847.7px;font-size:28.98px;font-weight:400;color:#333;letter-spacing:0.40px;">Просроченная</div>
<div class="t" style="left:1757.2px;top:1881.5px;font-size:28.98px;font-weight:400;color:#333;letter-spacing:0.26px;">процентная</div>
<div class="t" style="left:1757.2px;top:1915.3px;font-size:28.98px;font-weight:400;color:#333;letter-spacing:0.58px;">задолженность</div>
<div class="t" style="left:2140.7px;top:1847.7px;font-size:28.98px;font-weight:400;color:#333;letter-spacing:0.07px;">Ссудная</div>
<div class="t" style="left:2140.7px;top:1881.5px;font-size:28.98px;font-weight:400;color:#333;letter-spacing:0.58px;">задолженность</div>
<div class="t" style="left:2432.5px;top:1847.7px;font-size:28.98px;font-weight:400;color:#333;letter-spacing:-0.25px;">3,5 %</div>
<div class="t" style="left:2720.8px;top:1847.7px;font-size:28.98px;font-weight:400;color:#333;letter-spacing:0.30px;">Месяц 28</div>
<div class="t" style="left:3008.8px;top:1847.7px;font-size:28.98px;font-weight:400;color:#333;letter-spacing:0.00px;">01.01.2023 - 28.01.2023</div>
<div class="t" style="left:3380.8px;top:1847.7px;font-size:28.98px;font-weight:400;color:#333;letter-spacing:-0.25px;">28</div>
<svg style="left:0;top:0" width="3840" height="2160" fill="none" stroke="#2e2e2e" stroke-width="1.8" stroke-linejoin="round" stroke-linecap="round"><g transform="translate(0,1142)"><path d="M3624 707v-3a1.5 1.5 0 0 1 1.5-1.5h6a1.5 1.5 0 0 1 1.5 1.5v3"/><path d="M3615 707h26.5a2 2 0 0 1 2 2v1.5a2 2 0 0 1-2 2h-26.5a2 2 0 0 1-2-2v-1.5a2 2 0 0 1 2-2z"/><path d="M3616 712.5l2 25a2 2 0 0 0 2 2h16.5a2 2 0 0 0 2-2l2-25M3621.5 715.5l1 20M3628 715.5v20M3634.5 715.5l-1 20"/></g></svg>
<div class="abs" style="left:1432.5px;top:1996.4px;width:63px;height:63px;border-radius:15px;border:2px solid #2a3a6a"></div>
<div class="t" style="left:1457.0px;top:2014.3px;font-size:30.01px;font-weight:400;color:#222;letter-spacing:0.00px;">1</div>
<div class="t" style="left:1544.0px;top:2014.3px;font-size:30.01px;font-weight:400;color:#777;letter-spacing:0.00px;">2</div>
<div class="t" style="left:1631.5px;top:2014.3px;font-size:30.01px;font-weight:400;color:#777;letter-spacing:0.00px;">3</div>
<div class="t" style="left:1768.5px;top:2014.3px;font-size:30.01px;font-weight:400;color:#777;letter-spacing:0.00px;">29</div>
<svg style="left:0;top:0" width="3840" height="2160"><circle cx="1699" cy="2045" r="3" fill="#777"/><circle cx="1713" cy="2045" r="3" fill="#777"/><circle cx="1727" cy="2045" r="3" fill="#777"/><path d="M1384 2013L1372 2028L1384 2043" stroke="#cfcfcf" stroke-width="4" fill="none" stroke-linecap="round" stroke-linejoin="round"/><path d="M1866 2013L1878 2028L1866 2043" stroke="#666" stroke-width="4" fill="none" stroke-linecap="round" stroke-linejoin="round"/></svg>
</body></html>
